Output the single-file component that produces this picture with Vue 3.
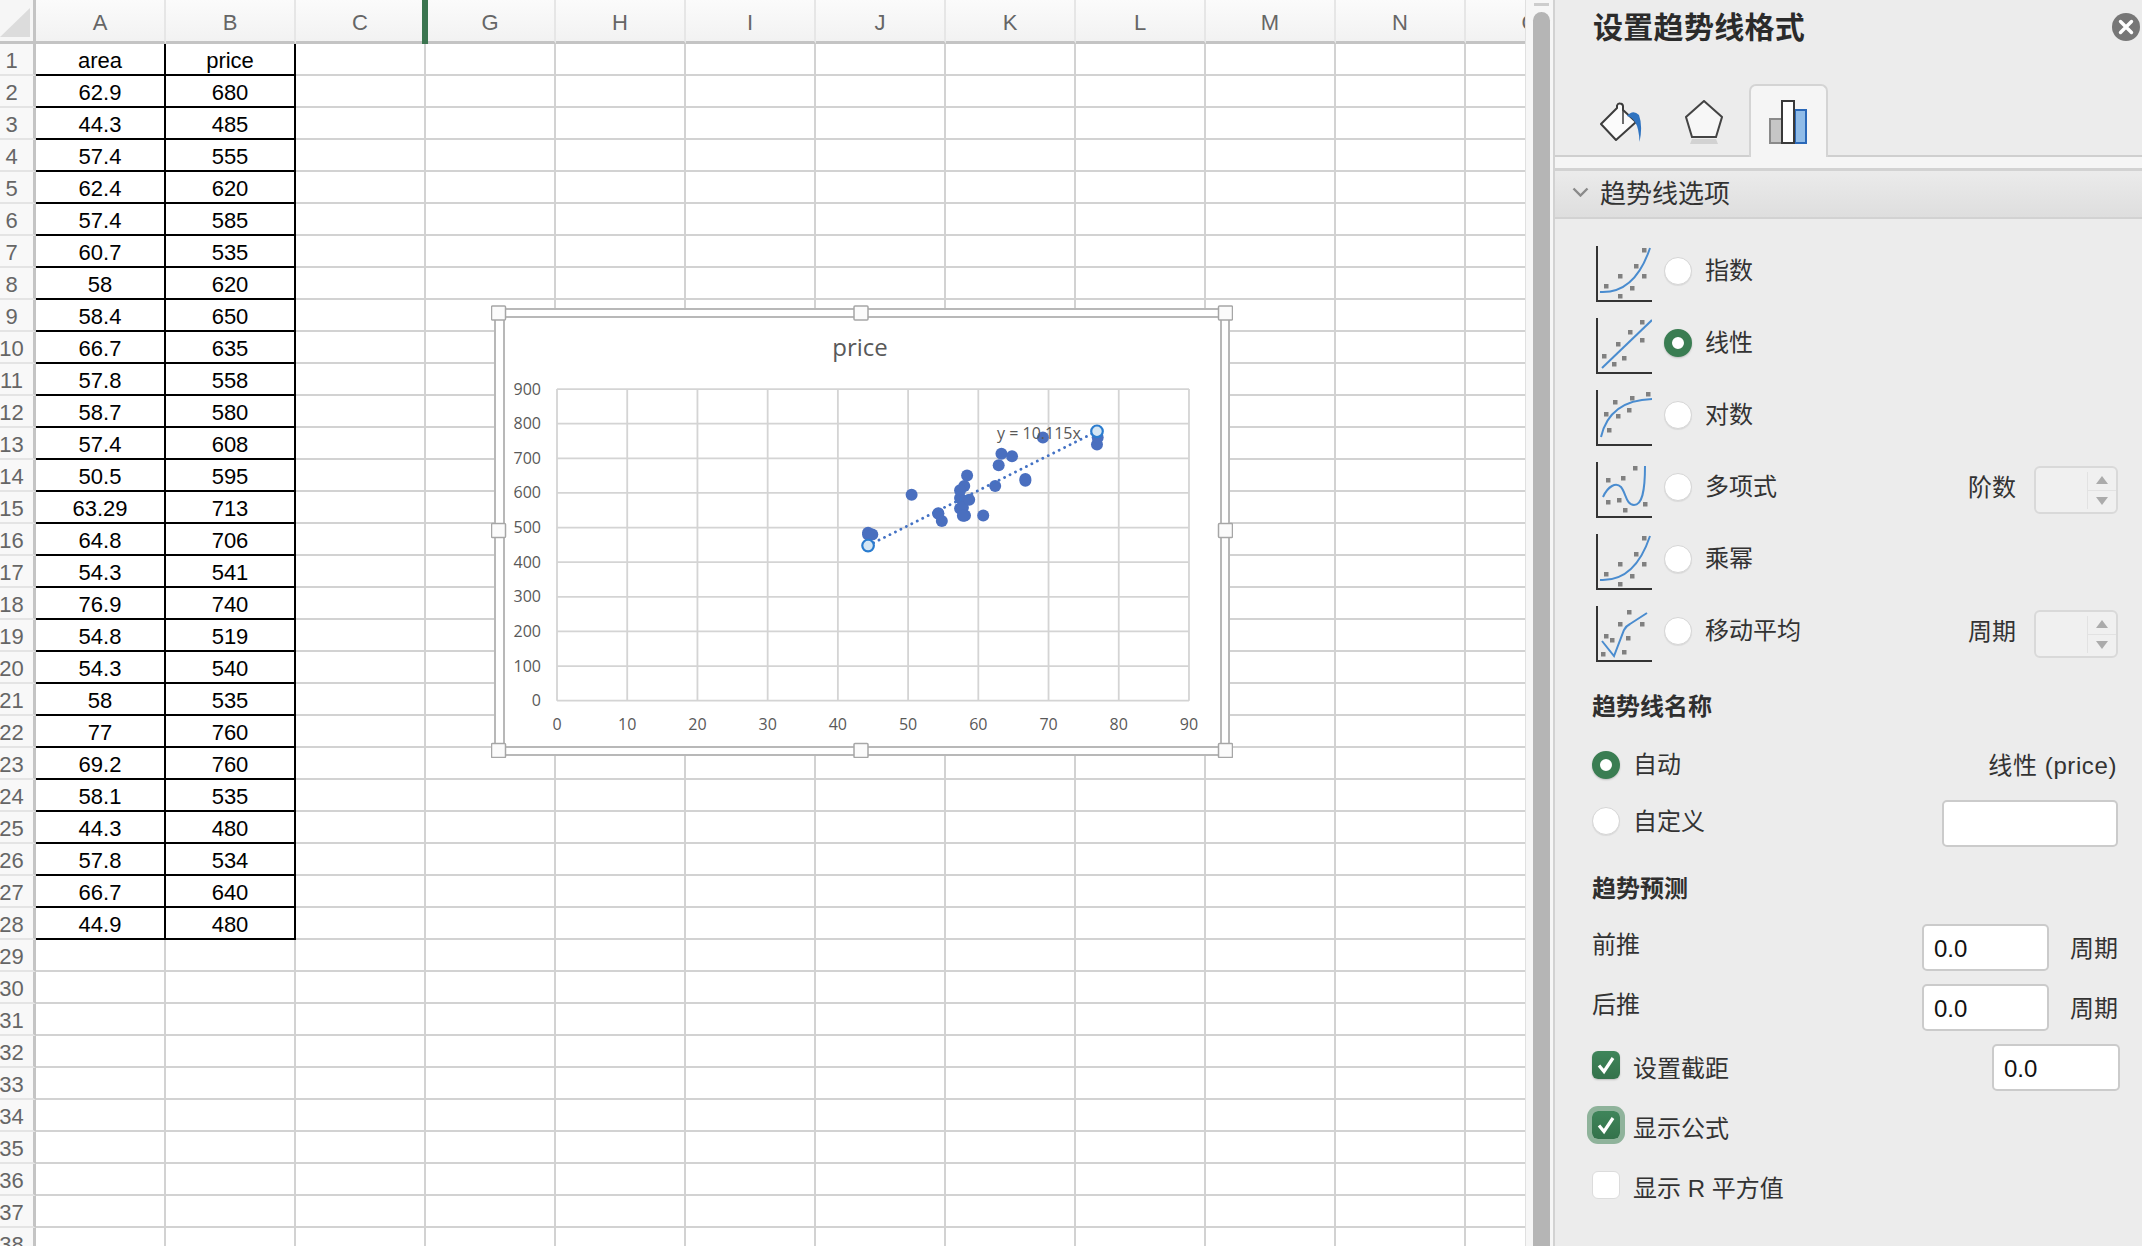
<script setup>
const columns = ['A', 'B', 'C', 'G', 'H', 'I', 'J', 'K', 'L', 'M', 'N', 'O']
const raw = [[62.9,680],[44.3,485],[57.4,555],[62.4,620],[57.4,585],[60.7,535],[58,620],[58.4,650],[66.7,635],[57.8,558],[58.7,580],[57.4,608],[50.5,595],[63.29,713],[64.8,706],[54.3,541],[76.9,740],[54.8,519],[54.3,540],[58,535],[77,760],[69.2,760],[58.1,535],[44.3,480],[57.8,534],[66.7,640],[44.9,480]]

const rows = Array.from({ length: 38 }, (_, i) => {
  let a = '', b = ''
  if (i === 0) { a = 'area'; b = 'price' }
  else if (raw[i - 1]) { a = raw[i - 1][0]; b = raw[i - 1][1] }
  return { num: i + 1, a, b, filled: i < 28 }
})
const blanks = columns.slice(2)

const px = v => 557 + v * 7.022
const py = v => 700.7 - v * 0.3463
const xTicks = [0,10,20,30,40,50,60,70,80,90]
const yTicks = [0,100,200,300,400,500,600,700,800,900]
const points = raw.map(p => ({ x: px(p[0]), y: py(p[1]) }))
const handles = [[498.5,313],[861,313],[1225.5,313],[498.5,530.5],[1225.5,530.5],[498.5,750.5],[861,750.5],[1225.5,750.5]]

const expDots = [[48,4],[40,20],[24,30],[48,30],[10,40],[36,42],[24,50]]
const trends = [
  { label: '指数', path: 'M4 46C22 47 42 38 54 2', dots: expDots },
  { label: '线性', path: 'M6 50L56 2', dots: [[46,4],[34,14],[22,26],[46,22],[8,38],[28,40],[18,46]], on: true },
  { label: '对数', path: 'M5 47C10 25 25 10 56 9', dots: [[52,4],[36,8],[19,12],[10,24],[33,20],[22,26],[13,40]] },
  { label: '多项式', path: 'M7 35C12 24 20 20 25 25C30 31 30 43 38 43C46 43 49 30 49 4', dots: [[39,6],[27,16],[12,18],[12,40],[23,38],[29,48],[49,42]], side: '阶数' },
  { label: '乘幂', path: 'M4 46C22 47 42 38 54 2', dots: expDots },
  { label: '移动平均', path: 'M6 35L18 50L28 24Q30 20 34 18L51 7', dots: [[33,6],[24,18],[46,18],[10,30],[16,34],[32,32],[7,48],[28,46]], side: '周期' }
]
</script>

<template>
  <div class="app">
    <div class="sheet">
      <div class="grid">
        <div class="corner">
          <svg width="36" height="44" viewBox="0 0 36 44"><polygon points="0,37 30,37 30,8" fill="#dcdcdc" /></svg>
        </div>
        <div v-for="c in columns" :key="c" class="col-head" :class="{ 'col-head--mark': c === 'C' }">{{ c }}</div>
        <template v-for="r in rows" :key="r.num">
          <div class="row-head">{{ r.num }}</div>
          <div class="cell" :class="{ 'cell--data': r.filled }">{{ r.a }}</div>
          <div class="cell" :class="{ 'cell--data': r.filled }">{{ r.b }}</div>
          <div v-for="b in blanks" :key="b" class="cell"></div>
        </template>
      </div>

      <svg class="chart" width="742" height="453" viewBox="491 305 742 453">
        <rect x="495" y="309" width="734" height="446" fill="#fff" stroke="#b8b8b8" stroke-width="2" />
        <rect x="504" y="317" width="717" height="430" fill="#fff" stroke="#b8b8b8" stroke-width="2" />
        <text x="860" y="356" class="chart-title" text-anchor="middle">price</text>
        <line v-for="t in xTicks" :key="'gx' + t" :x1="px(t)" :x2="px(t)" y1="389" y2="700.7" stroke="#d4d4d4" stroke-width="1.8" />
        <line v-for="t in yTicks" :key="'gy' + t" x1="557" x2="1189" :y1="py(t)" :y2="py(t)" stroke="#d4d4d4" stroke-width="1.8" />
        <text v-for="t in yTicks" :key="'ly' + t" x="541" :y="py(t) + 5.500" class="axis" text-anchor="end">{{ t }}</text>
        <text v-for="t in xTicks" :key="'lx' + t" :x="px(t)" y="729.500" class="axis" text-anchor="middle">{{ t }}</text>
        <circle v-for="(p, i) in points" :key="'p' + i" :cx="p.x" :cy="p.y" r="6" fill="#4a6fbf" />
        <line :x1="px(44.3)" :y1="py(448)" :x2="px(76.9)" :y2="py(778)" stroke="#4472c4" stroke-width="2.800" stroke-linecap="round" stroke-dasharray="0.1 6" />
        <text x="997" y="438.500" class="axis">y = 10.115x</text>
        <circle :cx="px(44.3)" :cy="py(448)" r="5.800" fill="#d4e6f4" stroke="#2a7ccf" stroke-width="2.200" />
        <circle :cx="px(76.9)" :cy="py(778)" r="5.800" fill="#d4e6f4" stroke="#2a7ccf" stroke-width="2.200" />
        <rect v-for="(h, i) in handles" :key="'h' + i" :x="h[0] - 7" :y="h[1] - 7" width="14" height="14" rx="1" fill="#fbfbfb" stroke="#a6a6a6" stroke-width="1.500" />
      </svg>
    </div>

    <div class="scroll">
      <div class="scroll-grip"></div>
      <div class="scroll-thumb"></div>
    </div>

    <aside class="panel">
      <header class="panel-head">
        <h1 class="panel-title">设置趋势线格式</h1>
        <svg class="close" width="28" height="28" viewBox="0 0 28 28">
          <circle cx="14" cy="14" r="14" fill="#777" />
          <path d="M8.500 8.500L19.500 19.500M19.500 8.500L8.500 19.500" stroke="#fff" stroke-width="3.400" stroke-linecap="round" />
        </svg>
      </header>

      <div class="tabs">
        <div class="tab">
          <svg width="42" height="40" viewBox="0 0 42 40">
            <path d="M1 22L17 6V3.500Q18 1 20 1.500Q22.500 1.500 23 4V8L36 20L16 38Z" fill="#fbfbfb" stroke="#3c3c3c" stroke-width="2" stroke-linejoin="round" />
            <path d="M23 5V22" stroke="#3c3c3c" stroke-width="1.500" fill="none" />
            <path d="M27 14Q33 7 39 13Q43 24 39.500 40Q39 26 35 20Q32 15 27 14Z" fill="#2f73c0" />
          </svg>
        </div>
        <div class="tab tab--pentagon">
          <svg width="38" height="44" viewBox="0 0 38 44">
            <polygon points="19,1 37,17 31,37 7,37 1,17" fill="#f7f7f7" stroke="#444" stroke-width="2" />
            <polygon points="7,39 31,39 33,44 5,44" fill="#d2d2d2" />
          </svg>
        </div>
        <div class="tab tab--on">
          <svg width="38" height="44" viewBox="0 0 38 44">
            <rect x="1" y="19" width="12" height="24" fill="#c6c6c6" stroke="#8a8a8a" stroke-width="2" />
            <rect x="26" y="10" width="11" height="33" fill="#90bce8" stroke="#2a68b8" stroke-width="2" />
            <rect x="13" y="1" width="12" height="42" fill="#fff" stroke="#3a3a3a" stroke-width="2" />
          </svg>
        </div>
      </div>
      <div class="band"></div>

      <div class="section-head">
        <svg width="17" height="10" viewBox="0 0 17 10"><path d="M1.500 1.500L8.500 8.500L15.500 1.500" fill="none" stroke="#8a8a8a" stroke-width="2.400" /></svg>
        <span>趋势线选项</span>
      </div>

      <div class="trends">
        <div v-for="t in trends" :key="t.label" class="trend">
          <svg class="trend-icon" width="56" height="56" viewBox="0 0 56 56">
            <path d="M1 0V55H56" fill="none" stroke="#333" stroke-width="2" />
            <rect v-for="(d, i) in t.dots" :key="i" :x="d[0] - 2" :y="d[1] - 2" width="4.500" height="4.500" fill="#808080" />
            <path :d="t.path" fill="none" stroke="#4a8ccf" stroke-width="2" />
          </svg>
          <span class="radio" :class="{ 'radio--on': t.on }"></span>
          <span class="trend-label">{{ t.label }}</span>
          <template v-if="t.side">
            <span class="side-label">{{ t.side }}</span>
            <div class="spinner">
              <div class="spinner-arrows">
                <svg width="28" height="18" viewBox="0 0 28 18"><polygon points="14,4 20,12 8,12" fill="#ababab" /></svg>
                <svg width="28" height="18" viewBox="0 0 28 18"><polygon points="8,6 20,6 14,14" fill="#ababab" /></svg>
              </div>
            </div>
          </template>
        </div>
      </div>

      <div class="form">
        <h2 class="form-title">趋势线名称</h2>
        <div class="form-row form-row--auto">
          <span class="radio radio--on"></span>
          <span class="form-label form-label--auto">自动</span>
          <span class="auto-name">线性 (price)</span>
        </div>
        <div class="form-row form-row--custom">
          <span class="radio"></span>
          <span class="form-label form-label--custom">自定义</span>
          <div class="input input--name"></div>
        </div>

        <h2 class="form-title form-title--second">趋势预测</h2>
        <div class="form-row form-row--predict">
          <span class="form-label form-label--plain">前推</span>
          <div class="input input--num">0.0</div>
          <span class="unit">周期</span>
        </div>
        <div class="form-row">
          <span class="form-label form-label--plain">后推</span>
          <div class="input input--num">0.0</div>
          <span class="unit">周期</span>
        </div>
        <div class="form-row">
          <span class="check check--on">
            <svg width="28" height="28" viewBox="0 0 28 28"><path d="M7 14.500L12 20.500L21 7" fill="none" stroke="#fff" stroke-width="3.200" /></svg>
          </span>
          <span class="form-label">设置截距</span>
          <div class="input input--num input--wide">0.0</div>
        </div>
        <div class="form-row">
          <span class="check check--on check--focus">
            <svg width="28" height="28" viewBox="0 0 28 28"><path d="M7 14.500L12 20.500L21 7" fill="none" stroke="#fff" stroke-width="3.200" /></svg>
          </span>
          <span class="form-label">显示公式</span>
        </div>
        <div class="form-row">
          <span class="check"></span>
          <span class="form-label">显示 R 平方值</span>
        </div>
      </div>
    </aside>
  </div>
</template>

<style>
html, body { margin: 0; background: #fff; overflow: hidden; }
</style>

<style scoped>
.app {
  display: flex;
  width: 2142px;
  height: 1246px;
  overflow: hidden;
  font-family: "Liberation Sans", "Noto Sans CJK SC", sans-serif;
  color: #333;
}
.sheet {
  position: relative;
  flex: 0 0 1525px;
  height: 1246px;
  overflow: hidden;
  background: #fff;
}
.grid {
  display: grid;
  grid-template-columns: 36px repeat(12, 130px);
  grid-template-rows: 44px repeat(38, 32px);
  width: 1596px;
}
.corner {
  background: #f6f6f6;
  border-right: 3px solid #c4c4c4;
  border-bottom: 3px solid #c4c4c4;
  box-sizing: border-box;
  overflow: hidden;
}
.col-head {
  position: relative;
  display: flex;
  align-items: center;
  justify-content: center;
  box-sizing: border-box;
  padding-top: 5px;
  background: linear-gradient(#fbfbfb, #f2f2f2);
  border-right: 2px solid #e6e6e6;
  border-bottom: 3px solid #c4c4c4;
  color: #666;
  font-size: 22px;
}
.col-head--mark::after {
  content: "";
  position: absolute;
  top: 0;
  right: -4px;
  bottom: -3px;
  width: 6px;
  background: #3b7550;
  z-index: 1;
}
.row-head {
  display: flex;
  align-items: center;
  justify-content: center;
  box-sizing: border-box;
  padding: 3px 10px 0 0;
  background: #f8f8f8;
  border-right: 3px solid #c4c4c4;
  border-bottom: 2px solid #e4e4e4;
  color: #666;
  font-size: 22px;
}
.cell {
  display: flex;
  align-items: center;
  justify-content: center;
  box-sizing: border-box;
  padding-top: 3px;
  border-right: 2px solid #d2d2d2;
  border-bottom: 2px solid #d2d2d2;
  color: #000;
  font-size: 22px;
}
.cell--data {
  border-right-color: #000;
  border-bottom-color: #000;
}
.chart {
  position: absolute;
  left: 491px;
  top: 305px;
}
.chart-title {
  font-family: "Open Sans", sans-serif;
  font-size: 24px;
  fill: #595959;
}
.axis {
  font-family: "Open Sans", sans-serif;
  font-size: 16px;
  fill: #595959;
}

.scroll {
  flex: 0 0 30px;
  box-sizing: border-box;
  height: 1246px;
  display: flex;
  flex-direction: column;
  padding: 3px 5px 0 7px;
  background: #f6f6f6;
  border-left: 1px solid #e0e0e0;
}
.scroll-grip {
  height: 3px;
  margin: 0 1px;
  background: #cdcdcd;
}
.scroll-thumb {
  flex: 1;
  margin-top: 6px;
  border-radius: 9px 9px 0 0;
  background: #b5b5b5;
}

.panel {
  flex: 1;
  min-width: 0;
  height: 1246px;
  box-sizing: border-box;
  background: #ececec;
  border-left: 2px solid #d2d2d2;
  margin-left: -2px;
}
.panel-head {
  display: flex;
  justify-content: space-between;
  align-items: flex-start;
  height: 84px;
  padding: 0 2px 0 38px;
}
.panel-title {
  margin: 0;
  font-size: 30px;
  line-height: 56px;
  font-weight: 700;
  letter-spacing: 0.3px;
  color: #2b2b2b;
}
.close { margin-top: 13px; }
.tabs {
  display: flex;
  gap: 5px;
  height: 73px;
  box-sizing: border-box;
  padding-left: 26px;
  border-bottom: 2px solid #cfcfcf;
}
.tab {
  width: 79px;
  height: 73px;
  box-sizing: border-box;
  display: flex;
  justify-content: center;
  padding-top: 16px;
}
.tab:first-child { padding-top: 18px; }
.tab--pentagon { padding-right: 2px; }
.tab--on {
  background: #f5f5f5;
  border: 2px solid #d4d4d4;
  border-bottom: 0;
  border-radius: 7px 7px 0 0;
  padding: 14px 2px 0 0;
}
.band {
  height: 11px;
  background: #f5f5f5;
}
.section-head {
  display: flex;
  align-items: center;
  gap: 11px;
  height: 51px;
  box-sizing: border-box;
  padding: 0 0 5px 17px;
  background: linear-gradient(#ebebeb, #dedede);
  border-top: 3px solid #d2d2d2;
  border-bottom: 2px solid #d2d2d2;
  font-size: 26px;
  color: #333;
}
.trends {
  display: flex;
  flex-direction: column;
  gap: 16px;
  padding: 27px 24px 0 41px;
}
.trend {
  display: flex;
  align-items: flex-start;
  height: 56px;
}
.trend-icon { flex: none; }
.radio {
  flex: none;
  box-sizing: border-box;
  width: 28px;
  height: 28px;
  border-radius: 50%;
  background: #fff;
  border: 1px solid #d6d6d6;
  box-shadow: 0 1px 1px rgba(0, 0, 0, .08);
}
.trend .radio { margin: 11px 0 0 12px; }
.radio--on {
  border: 8.500px solid #3a7d52;
  box-shadow: 0 1px 2px rgba(0, 0, 0, .2);
}
.trend-label {
  margin: 11px 0 0 13px;
  font-size: 24px;
  line-height: 27px;
}
.side-label {
  margin: 12px 18px 0 auto;
  font-size: 24px;
  line-height: 28px;
}
.spinner {
  flex: none;
  display: flex;
  justify-content: flex-end;
  box-sizing: border-box;
  width: 84px;
  height: 48px;
  margin-top: 4px;
  background: #f0f0f0;
  border: 2px solid #d9d9d9;
  border-radius: 6px;
}
.spinner-arrows {
  display: flex;
  flex-direction: column;
  width: 28px;
  margin: 4px 0 3px;
  border-left: 1px solid #e2e2e2;
}
.spinner-arrows svg { flex: none; }
.spinner-arrows svg:first-child { border-bottom: 1px solid #e2e2e2; }

.form {
  padding: 30px 24px 0 37px;
}
.form-title {
  margin: 0;
  font-size: 24px;
  line-height: 30px;
  font-weight: 700;
  color: #2f2f2f;
}
.form-title--second { margin-top: 27px; }
.form-row {
  display: flex;
  align-items: flex-start;
  height: 47px;
  margin-top: 13px;
}
.form-row--auto { height: 44px; margin-top: 26px; }
.form-row--auto .radio { margin-top: 3px; }
.form-row--custom { margin-top: 8px; }
.form-row--custom .radio { margin-top: 7px; }
.form-row--predict { margin-top: 20px; }
.form-label {
  margin: 11px 0 0 13px;
  font-size: 24px;
  line-height: 27px;
}
.form-label--auto { margin-top: 3px; }
.form-label--custom { margin-top: 8px; }
.form-label--plain { margin: 7px 0 0 0; }
.auto-name {
  margin: 4px 1px 0 auto;
  font-size: 24px;
  line-height: 28px;
  letter-spacing: 0.6px;
}
.input {
  box-sizing: border-box;
  height: 47px;
  background: #fff;
  border: 2px solid #cbcbcb;
  border-radius: 5px;
}
.input--name {
  width: 176px;
  margin-left: auto;
}
.input--num {
  width: 127px;
  margin-left: auto;
  padding-left: 10px;
  font-size: 24px;
  line-height: 45px;
  color: #111;
}
.input--wide {
  width: 128px;
  margin-right: -2px;
}
.unit {
  margin: 11px 0 0 21px;
  font-size: 24px;
  line-height: 28px;
}
.check {
  flex: none;
  box-sizing: border-box;
  width: 28px;
  height: 28px;
  margin-top: 7px;
  border-radius: 6px;
  background: #fff;
  border: 1px solid #dcdcdc;
}
.check svg { display: block; }
.check--on {
  background: linear-gradient(#3f855a, #34724b);
  border: 0;
  box-shadow: 0 1px 2px rgba(0, 0, 0, .2);
}
.check--focus {
  box-shadow: 0 0 0 5px #8fb39b;
}
</style>
